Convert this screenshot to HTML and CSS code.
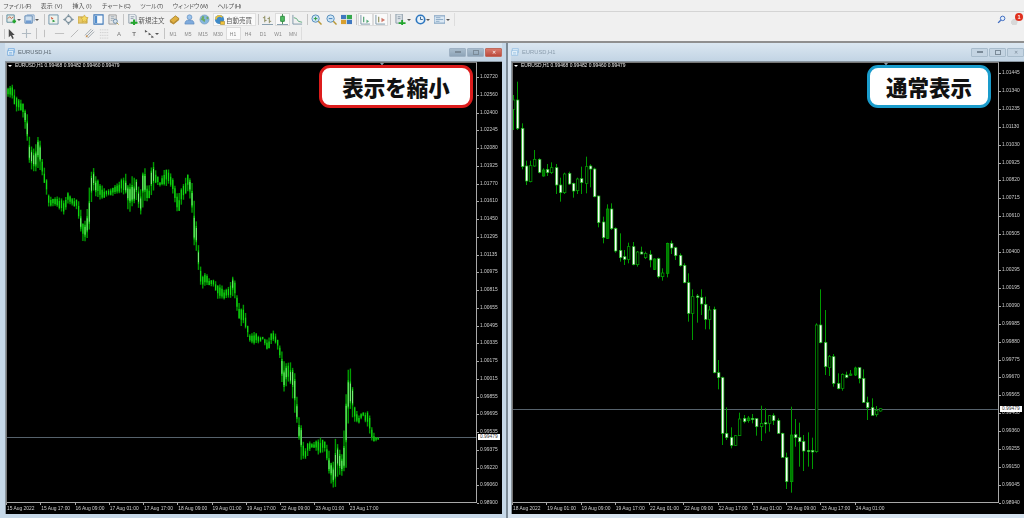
FILE: index.html
```html
<!DOCTYPE html>
<html lang="ja">
<head>
  <meta charset="UTF-8">
  <title>MetaTrader 4</title>
  <link rel="stylesheet" href="styles.css">
</head>
<body>
<svg class="defs" width="0" height="0">
  <symbol id="i-new" viewBox="0 0 12 12"><path d="M1 1h8v8H1z" fill="#dfe8e4" stroke="#5c8a9c"/><path d="M2 5l2-2 2 2 2-2" fill="none" stroke="#c8603c"/><path d="M7 8h4M9 6v4" stroke="#22a52c" stroke-width="2"/></symbol>
  <symbol id="i-prof" viewBox="0 0 12 12"><path d="M1 2h8v8H1z" fill="#cfe0f0" stroke="#5b84b0"/><path d="M3 1h8v7" fill="none" stroke="#7ba0c8"/><path d="M2 7h6v3H2z" fill="#6f9bd0"/></symbol>
  <symbol id="i-watch" viewBox="0 0 12 12"><path d="M1 1h10v10H1z" fill="#eef3ee" stroke="#6b92a8"/><path d="M3 3l3 2-2 1z" fill="#d05030"/><path d="M5 6l3 2-3 1z" fill="#2c9a3c"/></symbol>
  <symbol id="i-move" viewBox="0 0 12 12"><circle cx="6" cy="6" r="3.2" fill="none" stroke="#6f8694" stroke-width="1.100"/><path d="M6 0l1.5 2h-3zM6 12l1.5-2h-3zM0 6l2-1.5v3zM12 6l-2-1.5v3z" fill="#6f8694"/></symbol>
  <symbol id="i-fold" viewBox="0 0 12 12"><path d="M0 3h5l1 1h4v6H0z" fill="#e8c868" stroke="#b89838" stroke-width=".7"/><path d="M7 1l1.3 2.4L11 4 9 6l.5 3L7 7.600 4.500 9 5 6 3 4l2.700-.6z" fill="#f4d860" stroke="#c09a30" stroke-width=".6"/></symbol>
  <symbol id="i-win" viewBox="0 0 12 12"><path d="M1 1h10v10H1z" fill="#f4f8fc" stroke="#3f78b8" stroke-width="1.2"/><path d="M2 2h2.500v8H2z" fill="#4f8ccc"/></symbol>
  <symbol id="i-test" viewBox="0 0 12 12"><path d="M1 1h8v10H1z" fill="#e6e6e6" stroke="#9a9a9a"/><path d="M3 3h4M3 5h4M3 7h2" stroke="#9aa8b4"/><circle cx="8" cy="8" r="2.200" fill="#d8e4ee" stroke="#6c8ca8"/><path d="M9.500 9.500L11.500 11.500" stroke="#b89838"/></symbol>
  <symbol id="i-order" viewBox="0 0 12 12"><path d="M2 0h6l2 2v8H2z" fill="#eceff2" stroke="#8a99a6"/><path d="M4 3h4M4 5h3" stroke="#8a99a6"/><path d="M4 9.500h7.500M7.700 6v6" stroke="#22a52c" stroke-width="2.200"/></symbol>
  <symbol id="i-book" viewBox="0 0 12 12"><path d="M1 7l6-5 4 3-6 5z" fill="#e0b040" stroke="#9a7420" stroke-width=".8"/><path d="M1 7v2l4 2.500 6-5V5l-6 5z" fill="#b88a2c"/></symbol>
  <symbol id="i-user" viewBox="0 0 12 12"><circle cx="6" cy="3.500" r="2.600" fill="#9cc4ec" stroke="#5a88bc" stroke-width=".7"/><path d="M1 11c0-3.500 2-4.500 5-4.500s5 1 5 4.500z" fill="#7eaadc" stroke="#5a88bc" stroke-width=".7"/></symbol>
  <symbol id="i-globe" viewBox="0 0 12 12"><circle cx="6" cy="6" r="5" fill="#86b6de" stroke="#6a94b8" stroke-width=".6"/><path d="M4 2l2 1-1 2 2 1-1 3-2-2-2-1z" fill="#6cab62"/><path d="M8 3h2l.5 2-2 1z" fill="#6cab62"/></symbol>
  <symbol id="i-auto" viewBox="0 0 12 12"><circle cx="6" cy="6" r="5" fill="#3f8ac8"/><path d="M2 6a4 4 0 0 1 7-2.600" fill="none" stroke="#e8c040" stroke-width="1.800"/><path d="M7 8h4.500v3.500H7z" fill="#f2c23a" stroke="#98802a" stroke-width=".6"/></symbol>
  <symbol id="i-bars" viewBox="0 0 12 12"><path d="M3 2v7M1 4h2M3 7h2M8 3v7M6 5h2M8 8h2" fill="none" stroke="#8a8a5a"/><path d="M0 11.500h12" stroke="#7a94a4"/></symbol>
  <symbol id="i-cand" viewBox="0 0 12 12"><path d="M6 0v11" stroke="#3c8a4c"/><path d="M4 2.500h4V8H4z" fill="#4fbe62" stroke="#2e8a40"/><path d="M0 11.500h12" stroke="#7a94a4"/></symbol>
  <symbol id="i-line" viewBox="0 0 12 12"><path d="M1 1v10h10" fill="none" stroke="#7a94a4"/><path d="M2 4l3 1 2 3 4 1" fill="none" stroke="#5aa87a"/></symbol>
  <symbol id="i-zin" viewBox="0 0 12 12"><circle cx="5" cy="5" r="4" fill="#cfe6f6" stroke="#4f88b8"/><path d="M3 5h4M5 3v4" stroke="#2c9a3c"/><path d="M8 8l3.500 3.500" stroke="#b89838" stroke-width="1.600"/></symbol>
  <symbol id="i-zout" viewBox="0 0 12 12"><circle cx="5" cy="5" r="4" fill="#cfe6f6" stroke="#4f88b8"/><path d="M3 5h4" stroke="#3c78b8"/><path d="M8 8l3.500 3.500" stroke="#b89838" stroke-width="1.600"/></symbol>
  <symbol id="i-tile" viewBox="0 0 12 12"><path d="M0 1h6v5H0z" fill="#3f78c0"/><path d="M6 1h6v5H6z" fill="#34a84c"/><path d="M0 6h6v5H0z" fill="#d8a030"/><path d="M6 6h6v5H6z" fill="#3f78c0"/><path d="M0 6h12M6 1v10" stroke="#fff" stroke-width=".6"/></symbol>
  <symbol id="i-shift" viewBox="0 0 12 12"><path d="M1 1v10h10" fill="none" stroke="#7a94a4"/><path d="M4 3v6" stroke="#5aa87a" stroke-width="1.400"/><path d="M7 6l3 2-3 2z" fill="#5aa87a"/></symbol>
  <symbol id="i-scroll" viewBox="0 0 12 12"><path d="M1 1v10h10" fill="none" stroke="#7a94a4"/><path d="M4 3v6" stroke="#9a9a6a" stroke-width="1.400"/><path d="M7 4l4 2.500L7 9z" fill="#d07a6c"/></symbol>
  <symbol id="i-indi" viewBox="0 0 12 12"><path d="M1 0h7v10H1z" fill="#dde3e8" stroke="#8a99a6"/><path d="M3 3h3M3 5h3" stroke="#8a99a6"/><path d="M4 10h7.500M7.800 6.500v5.500" stroke="#22a52c" stroke-width="2"/></symbol>
  <symbol id="i-clock" viewBox="0 0 12 12"><circle cx="6" cy="6" r="4.600" fill="#e8f2fa" stroke="#2f78c0" stroke-width="1.800"/><path d="M6 3v3h2.500" fill="none" stroke="#2f5c88"/></symbol>
  <symbol id="i-tpl" viewBox="0 0 12 12"><path d="M0 2h12v8H0z" fill="#dbe8f4" stroke="#6f94b8"/><path d="M2 4h5M2 6h8M2 8h4" stroke="#8aa8c4"/></symbol>
  <symbol id="i-cursor" viewBox="0 0 12 12"><path d="M3 1v9l2.200-1.800L7 12l1.500-.8L6.800 7.500H9.500z" fill="#4a4a4a"/></symbol>
  <symbol id="i-cross" viewBox="0 0 12 12"><path d="M6 1v10M1 6h10" stroke="#b0bac2" stroke-width="1.200"/></symbol>
  <symbol id="i-vl" viewBox="0 0 12 12"><path d="M6 2v8" stroke="#bcbcbc"/></symbol>
  <symbol id="i-hl" viewBox="0 0 12 12"><path d="M1 6h10" stroke="#bcbcbc"/></symbol>
  <symbol id="i-trend" viewBox="0 0 12 12"><path d="M2 10l8-8" stroke="#b4b4b4"/></symbol>
  <symbol id="i-chan" viewBox="0 0 12 12"><path d="M1 8l7-7M4 11l7-7M2 10l8-8" stroke="#9aa2a8"/><circle cx="3" cy="9" r="1" fill="#c89050"/></symbol>
  <symbol id="i-fib" viewBox="0 0 12 12"><path d="M1 2h10M1 5h10M1 8h10M1 11h10" stroke="#c4c4c4" stroke-dasharray="1 1"/></symbol>
  <symbol id="i-arrows" viewBox="0 0 12 12"><path d="M1 2l3 2-3 1zM5 5l3 2-3 1zM8 8l3 2-3 1z" fill="#5a5a5a"/></symbol>
  <symbol id="i-find" viewBox="0 0 12 12"><circle cx="7.500" cy="4.500" r="3" fill="#e4eefa" stroke="#3f6cc0" stroke-width="1.300"/><path d="M5 7L1.500 10.500" stroke="#3f6cc0" stroke-width="1.800"/></symbol>
</svg>

<div class="app">
  <div class="menubar">
    <span class="kana">ファイル (F)</span><span>表示 (V)</span><span>挿入 (I)</span><span class="kana">チャート (C)</span><span class="kana">ツール (T)</span><span class="kana">ウィンドウ (W)</span><span class="kana">ヘルプ (H)</span>
  </div>

  <div class="toolrow toolrow-top">
    <div class="toolbar">
      <i class="grip"></i>
      <button class="tb drop"><svg><use href="#i-new"/></svg></button>
      <button class="tb drop"><svg><use href="#i-prof"/></svg></button>
      <i class="sep"></i>
      <button class="tb"><svg><use href="#i-watch"/></svg></button>
      <button class="tb"><svg><use href="#i-move"/></svg></button>
      <button class="tb"><svg><use href="#i-fold"/></svg></button>
      <button class="tb"><svg><use href="#i-win"/></svg></button>
      <button class="tb"><svg><use href="#i-test"/></svg></button>
      <i class="sep"></i>
      <button class="tb tb-text"><svg><use href="#i-order"/></svg>新規注文</button>
      <button class="tb"><svg><use href="#i-book"/></svg></button>
      <button class="tb"><svg><use href="#i-user"/></svg></button>
      <button class="tb"><svg><use href="#i-globe"/></svg></button>
      <button class="tb tb-text tb-auto"><svg><use href="#i-auto"/></svg>自動売買</button>
      <i class="sep"></i>
      <button class="tb"><svg><use href="#i-bars"/></svg></button>
      <button class="tb on"><svg><use href="#i-cand"/></svg></button>
      <button class="tb"><svg><use href="#i-line"/></svg></button>
      <i class="sep"></i>
      <button class="tb"><svg><use href="#i-zin"/></svg></button>
      <button class="tb"><svg><use href="#i-zout"/></svg></button>
      <button class="tb"><svg><use href="#i-tile"/></svg></button>
      <i class="sep"></i>
      <button class="tb on"><svg><use href="#i-shift"/></svg></button>
      <button class="tb on"><svg><use href="#i-scroll"/></svg></button>
      <i class="sep sep-wide"></i>
      <button class="tb drop drop-wide"><svg><use href="#i-indi"/></svg></button>
      <button class="tb drop drop-wide"><svg><use href="#i-clock"/></svg></button>
      <button class="tb drop drop-wide"><svg><use href="#i-tpl"/></svg></button>
    </div>
    <div class="tray">
      <svg class="tray-find"><use href="#i-find"/></svg>
      <div class="bell"><b>1</b></div>
    </div>
  </div>

  <div class="toolrow toolrow-bottom">
    <div class="toolbar">
      <i class="grip"></i>
      <button class="tb"><svg><use href="#i-cursor"/></svg></button>
      <button class="tb"><svg><use href="#i-cross"/></svg></button>
      <i class="sep"></i>
      <button class="tb"><svg><use href="#i-vl"/></svg></button>
      <button class="tb"><svg><use href="#i-hl"/></svg></button>
      <button class="tb"><svg><use href="#i-trend"/></svg></button>
      <button class="tb"><svg><use href="#i-chan"/></svg></button>
      <button class="tb"><svg><use href="#i-fib"/></svg></button>
      <button class="tb tb-letter">A</button>
      <button class="tb tb-letter tb-boxed">T</button>
      <button class="tb drop drop-arrows"><svg><use href="#i-arrows"/></svg></button>
      <i class="sep sep-tf"></i>
      <button class="tf">M1</button><button class="tf">M5</button><button class="tf">M15</button><button class="tf">M30</button><button class="tf on">H1</button><button class="tf">H4</button><button class="tf">D1</button><button class="tf">W1</button><button class="tf">MN</button>
    </div>
  </div>

  <div class="desktop">
    <section class="win win-left">
      <header class="win-title">
        <svg class="win-icon" viewBox="0 0 12 12"><path d="M2 1h9v6H2z" fill="#dcecf8" stroke="#5b9ad8"/><path d="M1 4h9v7H1z" fill="#eef6fc" stroke="#5b9ad8"/><path d="M3 7h5M3 9h5" stroke="#5b9ad8"/></svg>
        <span>EURUSD,H1</span>
        <div class="win-btns">
          <button class="wb"><i class="g-min"></i></button><button class="wb"><i class="g-max"></i></button><button class="wb wb-close">✕</button>
        </div>
      </header>
      <div class="chart" id="chart-left">
        <div class="badge badge-red">表示を縮小</div>
      </div>
    </section>

    <section class="win win-right">
      <header class="win-title">
        <svg class="win-icon" viewBox="0 0 12 12"><path d="M2 1h9v6H2z" fill="#dcecf8" stroke="#8ab8e0"/><path d="M1 4h9v7H1z" fill="#eef6fc" stroke="#8ab8e0"/><path d="M3 7h5M3 9h5" stroke="#8ab8e0"/></svg>
        <span>EURUSD,H1</span>
        <div class="win-btns">
          <button class="wb"><i class="g-min"></i></button><button class="wb"><i class="g-max"></i></button><button class="wb">✕</button>
        </div>
      </header>
      <div class="chart" id="chart-right">
        <div class="badge badge-blue">通常表示</div>
      </div>
    </section>
  </div>
</div>
<script src="app.js"></script>
</body>
</html>
```

FILE: styles.css
```css
:root{
  --bar:#f0f0f0;
  --line:#d4d4d4;
  --frame:#c6d8e8;
  --axis:#a8a8a8;
}
*{box-sizing:border-box;margin:0;padding:0}
html,body{height:100%;overflow:hidden}
body{background:var(--bar);font-family:"Liberation Sans","Noto Sans CJK JP",sans-serif;color:#444}
.defs{position:absolute}
.app{height:518px;display:flex;flex-direction:column;filter:blur(.35px)}

/* menu + toolbars */
.menubar{height:12px;display:flex;align-items:center;padding-left:3px;gap:10px;font-size:6px;color:#555;border-bottom:1px solid var(--line)}
.kana{letter-spacing:-.7px}
.toolrow{height:13px;display:flex;justify-content:space-between;align-items:center;flex:none}
.toolrow-top{margin:1px 0}
.toolbar{display:flex;align-items:center;height:13px;border-right:1px solid #ddd}
.grip{width:1px;height:10px;background:#c8c8c8;margin:0 3px 0 2px}
.sep{width:1px;height:11px;background:#c4c4c4;margin:0 1.500px;flex:none}
.sep-wide{margin-right:4.500px}
.tb{width:15px;height:13px;border:0;background:none;display:flex;align-items:center;justify-content:center;flex:none;font-family:inherit}
.tb svg{width:11px;height:11px;flex:none}
.tb.drop{width:18px;justify-content:flex-start;position:relative}
.tb.drop::after{content:"";position:absolute;right:3px;top:6px;border:2px solid transparent;border-top-color:#555;border-bottom:0}
.tb.drop-wide{width:19.500px}
.tb.drop-wide::after{right:4px}
.tb.drop-arrows{width:20px;padding-left:2px}
.tb.on{background:#fafafa;outline:1px solid #dcdcdc;outline-offset:-1px}
.tb-text{width:auto;padding:0 2px 0 1.500px;gap:1px;font-size:6.500px;color:#555}
.tb-auto{background:#fafafa;outline:1px solid #e0e0e0;outline-offset:-1px;margin-left:1.500px;padding:0 4px 0 1px}
.tb-letter{font-size:6px;color:#777}
.tb-boxed{font-weight:bold;background:linear-gradient(#eee,#eee) center/9px 9px no-repeat}
.tf{width:15px;height:13px;border:0;background:none;font-size:5px;color:#888;font-family:inherit;flex:none}
.tf.on{background:#fafafa;outline:1px solid #dcdcdc;outline-offset:-1px}
.toolrow-bottom .grip{margin:0 -1.500px 0 4px}
.toolrow-bottom .sep{margin:0 0 0 2px}
.toolrow-bottom .sep-tf{margin-right:1px}
.tray{display:flex;align-items:center;padding-right:2px;gap:5px}
.tray-find{width:9px;height:9px}
.bell{width:11px;height:11px;position:relative;background:radial-gradient(circle at 30% 75%,#d8d8d8 0 3px,transparent 3.500px)}
.bell b{position:absolute;right:-1px;top:-1px;width:8px;height:8px;border-radius:50%;background:#e0301e;color:#fff;font-size:5.500px;line-height:8px;text-align:center}

/* mdi area */
.desktop{flex:1;margin-top:1px;border-top:2px solid #8f8f8f;display:flex;gap:2px;background:#7c8a96;min-height:0}
.win{background:var(--frame);display:flex;flex-direction:column;padding:0 0 4px}
.win-left{width:506px;padding-left:5px;padding-right:4px}
.win-right{flex:1;padding-left:3px;background:#d6e3ef}
.win-title{height:18px;display:flex;align-items:center;gap:3px;font-size:5.800px;color:#5a6670;background:linear-gradient(#dbe7f1,#c2d4e4)}
.win-left .win-title{padding-left:2px}
.win-right .win-title{color:#8a9cac}
.win-icon{width:8px;height:8px;flex:none}
.win-btns{margin-left:auto;display:flex;gap:1px}
.wb{width:17px;height:9px;border:1px solid #a8bccc;border-radius:1px;background:#c4d4e2;display:flex;align-items:center;justify-content:center;font-size:5px;color:#7a8a98;font-family:inherit;line-height:1}
.win-left .wb{background:linear-gradient(#a8bccc,#8ea4b8);border-color:#9fb2c4;color:#fff}
.win-left .wb-close{background:linear-gradient(#d87a6c,#bc4a3c);border-color:#c06a5c}
.g-min{width:6px;height:2px;border:1px solid #7a8a98;background:#ddd;display:block}
.g-max{width:6px;height:5px;border:1px solid #7a8a98;display:block}

/* chart */
.chart{flex:1;background:#000;position:relative;display:grid;grid-template-columns:1fr 25px;grid-template-rows:1fr 11px;color:#cfcfcf;border:1px solid #8a96a0;border-width:1px 0 0 1px;min-height:0}
.plot{position:relative;border:1px solid var(--axis);border-top-color:#777;border-left-color:#777;min-height:0}
.plot svg{position:absolute;left:0;top:0;width:100%;height:100%;display:block}
.info{position:absolute;left:1px;top:0;font-size:4.900px;color:#e8e8e8;white-space:nowrap;display:flex;align-items:center;gap:3px}
.info::before{content:"";border:2px solid transparent;border-top-color:#fff;border-bottom:0}
.prices{display:flex;flex-direction:column;justify-content:space-between;font-size:4.900px;line-height:6px;position:relative;margin-bottom:-3px}
#chart-left .prices{padding-top:12px}
#chart-right .prices{padding-top:8px}
.prices span{display:block;padding-left:3px;position:relative}
.prices span::before{content:"";position:absolute;left:0;top:3px;width:2px;height:1px;background:var(--axis)}
.prices em{position:absolute;left:1px;width:22px;height:6px;background:#fff;color:#333;font-style:normal;line-height:6px;padding-left:2px;z-index:1}
.times{display:flex;grid-column:1 / -1;font-size:4.900px;line-height:12px;white-space:nowrap}
.times span{width:34.270px;flex:none;padding-left:1px;position:relative}
.times span::before{content:"";position:absolute;left:0;top:0;width:1px;height:2px;background:var(--axis)}
.badge{position:absolute;top:3px;height:43px;background:#fff;border-radius:11px;border:3px solid;display:flex;align-items:center;justify-content:center;font-size:21.500px;font-weight:900;color:#111;z-index:2}
.badge-red{left:313px;width:154px;border-color:#dd1c1c}
.badge-blue{left:355px;width:124px;border-color:#1a9ccc}
```

FILE: app.js
```js
/* ========== DATA ========== */
const leftPrices=['1.02720','1.02560','1.02400','1.02245','1.02080','1.01925','1.01770','1.01610','1.01450','1.01295','1.01135','1.00975','1.00815','1.00655','1.00495','1.00335','1.00175','1.00015','0.99855','0.99695','0.99535','0.99375','0.99220','0.99060','0.98900'];
const rightPrices=['1.01445','1.01340','1.01235','1.01130','1.01030','1.00925','1.00820','1.00715','1.00610','1.00505','1.00400','1.00295','1.00195','1.00090','0.99985','0.99880','0.99775','0.99670','0.99565','0.99460','0.99360','0.99255','0.99150','0.99045','0.98940'];
const leftTimes=['15 Aug 2022','15 Aug 17:00','16 Aug 09:00','17 Aug 01:00','17 Aug 17:00','18 Aug 09:00','19 Aug 01:00','19 Aug 17:00','22 Aug 09:00','23 Aug 01:00','23 Aug 17:00'];
const rightTimes=['18 Aug 2022','19 Aug 01:00','19 Aug 09:00','19 Aug 17:00','22 Aug 01:00','22 Aug 09:00','22 Aug 17:00','23 Aug 01:00','23 Aug 09:00','23 Aug 17:00','24 Aug 01:00'];
const ohlc='EURUSD,H1 0.99468 0.99482 0.99460 0.99479';

// candles: wick top, body top, body bottom, wick bottom, kind (w=white, d=hollow, f=filled green)
// values are thirds of a pixel, measured from y=70 (part 1) and y=270 (part 2)
const candlesA=[
[75,90,118,180,'d'],[35,90,175,180,'w'],[160,175,290,298,'w'],[272,288,333,345,'w'],[272,287,335,337,'d'],
[240,268,288,290,'d'],[265,268,307,310,'w'],[295,300,318,320,'f'],[282,298,308,318,'w'],[277,293,308,312,'d'],
[282,293,345,372,'w'],[323,345,368,395,'w'],[308,312,368,372,'d'],[305,310,342,345,'w'],[338,340,363,383,'w'],
[323,327,362,372,'d'],[290,326,338,372,'w'],[260,290,340,370,'d'],[283,288,297,352,'w'],[293,297,380,382,'w'],
[377,378,458,472,'w'],[440,456,503,520,'w'],[403,417,505,507,'f'],[400,417,476,480,'w'],[472,475,543,548,'w'],
[490,541,563,575,'w'],[540,560,568,585,'w'],[518,530,568,580,'d'],[516,530,584,586,'w'],[543,546,584,590,'d'],
[530,546,552,553,'w'],[545,550,563,567,'d'],[541,554,570,592,'w'],[565,567,598,600,'f'],[563,566,620,625,'w'],
[595,609,620,632,'d'],[518,520,610,622,'f'],[512,520,534,552,'w'],[530,533,557,570,'w'],[550,556,587,590,'w'],[580,586,638,640,'w']];
const candlesB=[
[10,38,130,155,'w'],[58,80,130,210,'d'],[72,78,82,158,'w'],[58,82,102,135,'w'],[80,103,148,178,'w'],
[108,120,148,178,'d'],[110,118,308,310,'w'],[270,308,323,358,'w'],[320,323,490,525,'w'],[412,490,503,510,'w'],
[472,502,526,535,'w'],[495,497,526,528,'d'],[428,447,497,498,'d'],[435,445,455,460,'w'],[438,444,452,458,'f'],
[432,445,449,460,'w'],[445,446,470,497,'w'],[407,460,470,513,'d'],[415,458,462,490,'w'],[435,437,460,485,'d'],
[430,437,452,465,'w'],[445,452,490,490,'w'],[488,490,562,562,'w'],[548,562,635,657,'w'],[410,495,635,668,'f'],
[447,494,503,530,'w'],[458,502,515,590,'w'],[495,514,543,603,'w'],[487,541,545,590,'w'],[503,541,546,597,'w'],
[160,165,545,548,'d'],[58,165,218,220,'w'],[120,217,290,315,'w'],[255,260,292,318,'d'],[252,260,340,350,'w'],
[310,340,356,358,'w'],[310,313,355,362,'d'],[305,315,322,325,'w'],[300,312,316,318,'f'],[290,294,315,318,'f'],
[292,293,325,340,'w'],[298,325,397,398,'w'],[380,397,413,450,'w'],[385,413,436,437,'w'],[408,422,434,440,'d'],[415,416,423,425,'d']];

// compressed chart: envelope of the bars as [x, top, bottom], thirds of a pixel
const envA=[[22,55,85],[38,38,88],[48,75,130],[60,85,120],[72,100,155],[85,140,240],[90,225,305],[100,235,310],[118,190,300],[128,270,320],[138,312,370],[147,375,415],[160,385,410],[175,375,415],[190,390,440],[203,365,405],[215,380,405],[230,385,420],[240,400,480],[248,455,515],[258,450,525],[268,345,480],[278,280,360],[290,320,385],[305,345,395],[320,360,380],[340,350,378],[358,330,370],[378,310,380],[385,350,435],[395,318,420],[410,320,390],[420,370,445],[432,270,400],[445,370,395],[458,255,375],[465,295,345],[480,335,350],[495,288,350],[510,300,345],[520,330,385],[535,375,440],[548,340,395],[565,305,365],[575,330,410],[580,360,520]];
const envB=[[20,15,105],[28,100,180],[36,170,215],[48,150,195],[60,180,200],[72,175,200],[85,195,245],[95,192,240],[105,210,240],[118,195,235],[125,165,235],[137,180,240],[143,238,290],[155,262,325],[163,250,315],[170,300,345],[180,345,370],[192,330,375],[205,345,372],[218,350,360],[233,360,400],[247,328,365],[258,340,375],[268,372,405],[278,395,515],[285,430,515],[298,420,480],[315,455,585],[325,585,640],[332,595,720],[343,690,725],[355,660,705],[368,670,680],[388,650,710],[405,660,695],[418,690,770],[428,745,810],[436,650,805],[445,680,770],[458,700,770],[470,490,745],[477,420,550],[484,460,590],[493,550,605],[505,585,615],[520,575,590],[537,572,640],[548,630,670],[558,650,665],[567,652,658]];

/* ========== RENDER ========== */
const NS='http://www.w3.org/2000/svg';
function el(name,attrs,parent){
  const e=document.createElementNS(NS,name);
  for(const k in attrs) e.setAttribute(k,attrs[k]);
  parent.appendChild(e);
  return e;
}

// shared frame of a chart: plot, price scale, time scale
function frame(id,prices,times,currentTop,label){
  const chart=document.getElementById(id);
  const plot=document.createElement('div');
  plot.className='plot';
  plot.innerHTML=`<div class="info">${ohlc}</div>`;
  const svg=document.createElementNS(NS,'svg');
  plot.prepend(svg);
  const scale=document.createElement('div');
  scale.className='prices';
  scale.innerHTML=prices.map(p=>`<span>${p}</span>`).join('')+`<em style="top:${currentTop}px">${label}</em>`;
  const row=document.createElement('div');
  row.className='times';
  row.innerHTML=times.map(t=>`<span>${t}</span>`).join('');
  chart.prepend(plot,scale,row);
  return svg;
}

function priceLine(svg,y,marker){
  el('path',{d:`M0 ${y+.5}H500`,stroke:'#56626c','stroke-width':1},svg);
  el('path',{d:`M${marker-2} 0h4l-2 2.500z`,fill:'#8a9caa'},svg);
}

// the hand-read candles of the normal chart
let candleNo=0;
function drawCandles(svg,list,oy){
  list.forEach(([hi,top,bot,lo,kind])=>{
    const x=Math.round(candleNo++*4.27);
    el('path',{d:`M${x+.5} ${oy+hi/3}V${oy+lo/3}`,stroke:'#009a00'},svg);
    const fill=kind==='w'?'#fff':kind==='f'?'#007a00':'#000';
    el('rect',{x:x-.5,y:oy+top/3,width:2.4,height:(bot-top)/3,fill,stroke:kind==='w'?'#18b818':'#00a800','stroke-width':.7},svg);
  });
}

// bars of the compressed chart, spread inside the envelope
function drawBars(svg,pts,first,last){
  const at=(x,k)=>{
    for(let i=1;i<pts.length;i++){
      if(x<=pts[i][0]){
        const t=(x-pts[i-1][0])/(pts[i][0]-pts[i-1][0]);
        return pts[i-1][k]+(pts[i][k]-pts[i-1][k])*t;
      }
    }
    return pts[pts.length-1][k];
  };
  for(let x=first,n=0;x<=last;x+=2.14,n++){
    const top=at(x,1),bot=at(x,2),h=bot-top;
    const jig=((n*37)%11)/11; // fixed pattern, the picture must not change between runs
    const jig2=((n*23)%7)/7;
    const wt=top+jig*Math.min(h*.15,3),wb=bot-(1-jig)*Math.min(h*.15,3);
    el('path',{d:`M${x} ${wt}V${wb}`,stroke:'#009c00','stroke-width':1.4},svg);
    const bt=top+h*(.1+.3*jig2),bb=bot-h*(.1+.3*(1-jig2));
    el('path',{d:`M${x} ${bt}V${bb}`,stroke:'#12d812','stroke-width':1.2},svg);
    if(h>22) el('path',{d:`M${x} ${bt+2}V${bb-2}`,stroke:'#98f098','stroke-width':.8},svg);
  }
}

function convert(pts,ox,oy){return pts.map(([x,a,b])=>[ox+x/3,oy+a/3,oy+b/3])}

/* ---------- left: compressed, plot origin (7,63) ---------- */
const leftSvg=frame('chart-left',leftPrices,leftTimes,372,'0.99479');
priceLine(leftSvg,374,375);
drawBars(leftSvg,convert(envA,-7,7).concat(convert(envB,183,157)),1,372);

/* ---------- right: normal, plot origin (513,63) ---------- */
const rightSvg=frame('chart-right',rightPrices,rightTimes,344,'0.99479');
priceLine(rightSvg,346,373);
drawCandles(rightSvg,candlesA,7);
drawCandles(rightSvg,candlesB,207);
```
